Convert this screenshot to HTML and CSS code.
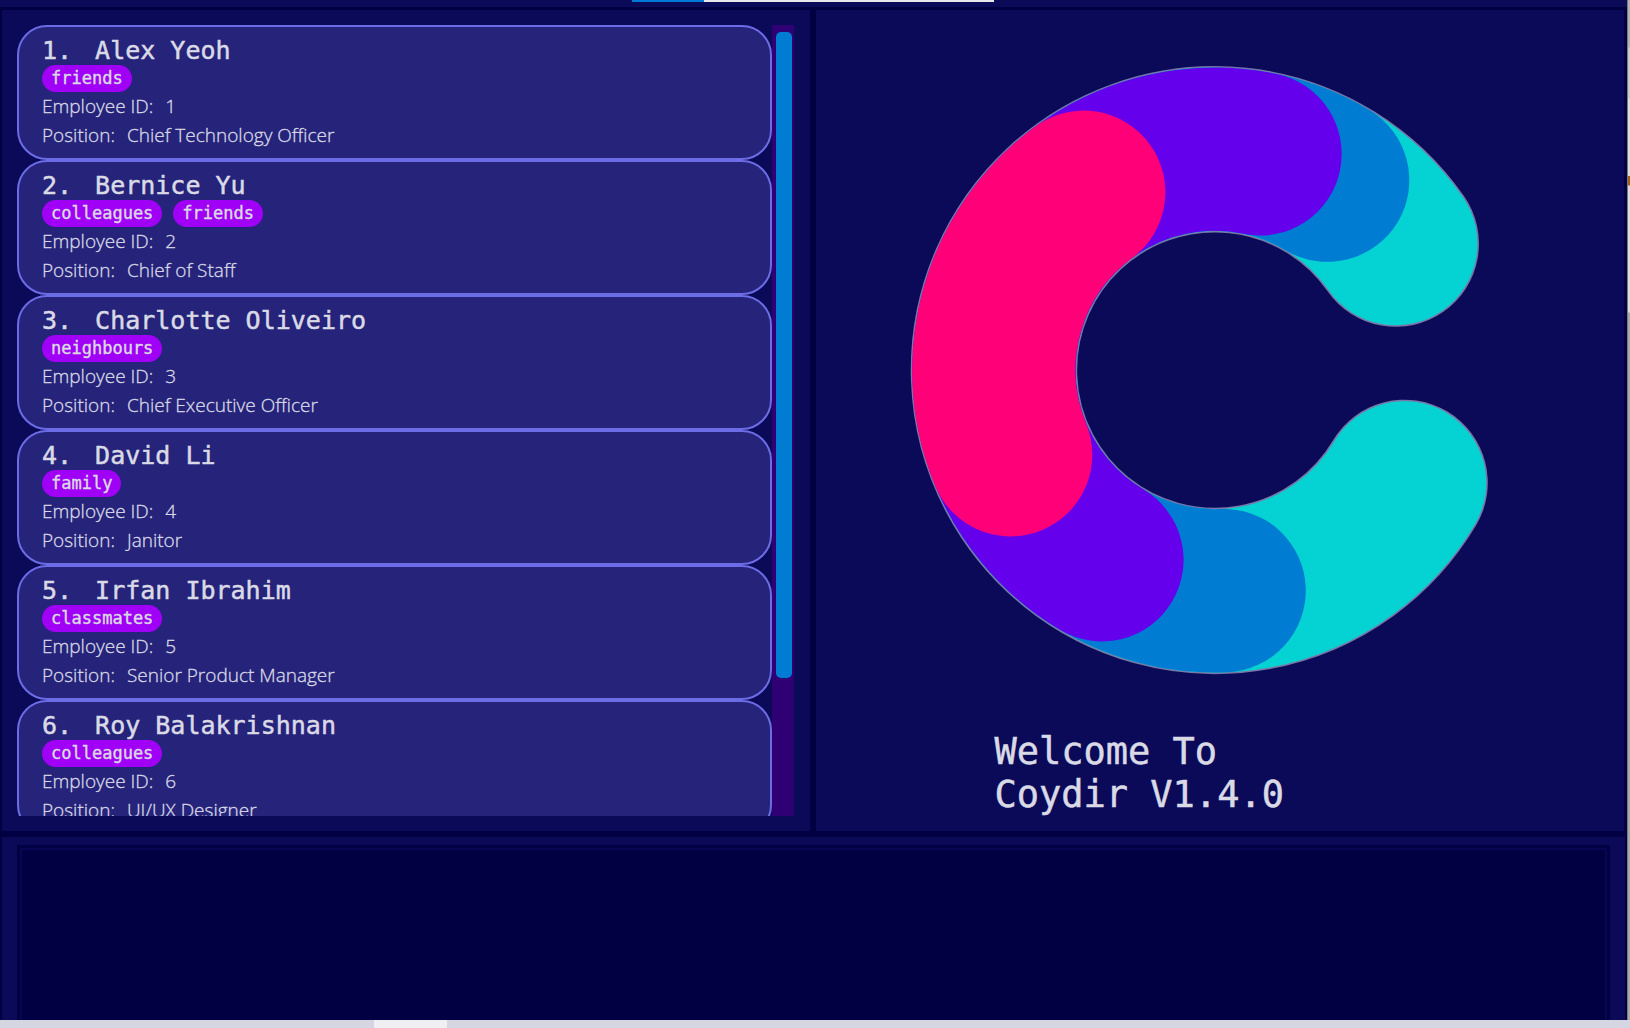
FILE: index.html
```html
<!DOCTYPE html>
<html lang="en">
<head>
<meta charset="utf-8">
<title>Coydir</title>
<meta name="viewport" content="width=device-width, initial-scale=1">
<link rel="stylesheet" href="styles.css">
</head>
<body>
<div class="window">
  <div class="app">
    <div class="topbar"><span class="topbar-accent"></span><span class="topbar-rest"></span></div>
    <main class="main">
      <section class="panel list-panel" aria-label="Employees">
        <ol class="list">
          <li class="card">
            <h2 class="name"><span>1.</span><span>Alex Yeoh</span></h2>
            <div class="tags"><span class="tag">friends</span></div>
            <p class="field"><span>Employee ID:</span><span>1</span></p>
            <p class="field"><span>Position:</span><span>Chief Technology Officer</span></p>
          </li>
          <li class="card">
            <h2 class="name"><span>2.</span><span>Bernice Yu</span></h2>
            <div class="tags"><span class="tag">colleagues</span><span class="tag">friends</span></div>
            <p class="field"><span>Employee ID:</span><span>2</span></p>
            <p class="field"><span>Position:</span><span>Chief of Staff</span></p>
          </li>
          <li class="card">
            <h2 class="name"><span>3.</span><span>Charlotte Oliveiro</span></h2>
            <div class="tags"><span class="tag">neighbours</span></div>
            <p class="field"><span>Employee ID:</span><span>3</span></p>
            <p class="field"><span>Position:</span><span>Chief Executive Officer</span></p>
          </li>
          <li class="card">
            <h2 class="name"><span>4.</span><span>David Li</span></h2>
            <div class="tags"><span class="tag">family</span></div>
            <p class="field"><span>Employee ID:</span><span>4</span></p>
            <p class="field"><span>Position:</span><span>Janitor</span></p>
          </li>
          <li class="card">
            <h2 class="name"><span>5.</span><span>Irfan Ibrahim</span></h2>
            <div class="tags"><span class="tag">classmates</span></div>
            <p class="field"><span>Employee ID:</span><span>5</span></p>
            <p class="field"><span>Position:</span><span>Senior Product Manager</span></p>
          </li>
          <li class="card">
            <h2 class="name"><span>6.</span><span>Roy Balakrishnan</span></h2>
            <div class="tags"><span class="tag">colleagues</span></div>
            <p class="field"><span>Employee ID:</span><span>6</span></p>
            <p class="field"><span>Position:</span><span>UI/UX Designer</span></p>
          </li>
        </ol>
        <div class="track"><div class="thumb"></div></div>
      </section>
      <section class="panel welcome">
        <svg class="logo" viewBox="-295 -300 600 600" role="img" aria-label="Coydir logo" fill="none" stroke-linecap="round" stroke-width="157">
          <path stroke="#7878a8" stroke-width="160" d="M174-121.500A212.300 212.300 0 1 0 182.500 108.500"/>
          <path stroke="#05d2d2" d="M174-121.500A212.300 212.300 0 1 0 182.500 108.500"/>
          <path stroke="#007dd2" d="M108.500-182.500A212.300 212.300 0 1 0 9 212.100"/>
          <path stroke="#6400eb" d="M43.500-207.800A212.300 212.300 0 0 0-108.500 182.500"/>
          <path stroke="#ff0078" d="M-126-170.900A212.300 212.300 0 0 0-196.300 81.500"/>
        </svg>
        <h1 class="welcome-text">Welcome To<br>Coydir V1.4.0</h1>
      </section>
    </main>
    <section class="result">
      <textarea class="result-box" aria-label="Result" readonly></textarea>
    </section>
  </div>
  <div class="edge"></div>
  <div class="footer"><span class="footer-light"></span></div>
</div>
</body>
</html>
```
FILE: styles.css
```css
* { box-sizing: border-box; }

body {
  margin: 0;
  background: #000042;
  color: #dadae6;
  font-family: "Open Sans", "Noto Sans", sans-serif;
  font-size: 19px;
}

.window {
  display: grid;
  grid-template-columns: minmax(0, 1fr) 3px;
  grid-template-rows: minmax(0, 1fr) 8px;
  height: 100vh;
  overflow: hidden;
}

.app { display: flex; flex-direction: column; min-height: 0; }

.topbar {
  display: flex;
  flex: none;
  height: 7px;
  padding-left: 632px;
  background: #0a0a58;
}
.topbar span { height: 2px; }
.topbar-accent { width: 72px; background: #0078d7; }
.topbar-rest { width: 290px; background: #e8e8e8; }

.main {
  display: grid;
  grid-template-columns: 1fr 1fr;
  gap: 6px;
  flex: 1;
  min-height: 0;
  padding: 3px 3px 6px 2px;
}

.panel { min-width: 0; min-height: 0; background: #0a0a58; }

.list-panel {
  display: grid;
  grid-template-columns: minmax(0, 1fr) 22px;
  padding: 15px 16px 15px 15px;
}

.list { margin: 0; padding: 0; list-style: none; overflow: hidden; }

.card {
  padding: 9px 23px 8px;
  border: 2px solid #6c6ce6;
  border-radius: 30px;
  background: #25237a;
}

.name {
  display: flex;
  gap: 23px;
  margin: 0;
  font: 400 25px/29px "DejaVu Sans Mono", monospace;
  -webkit-text-stroke: 0.5px currentColor;
}

.tags { display: flex; gap: 11px; }
.tag {
  padding: 0 9px;
  border-radius: 14px;
  background: #a000f5;
  font: 400 17px/27px "DejaVu Sans Mono", monospace;
  -webkit-text-stroke: 0.4px currentColor;
}

.field {
  display: flex;
  gap: 12px;
  margin: 0;
  font-weight: 300;
  line-height: 29px;
  -webkit-text-stroke: 0.3px currentColor;
}

.track { padding: 7px 2px 6px 4px; background: #2f0073; }
.thumb { height: 83%; border-radius: 5px; background: #007dd2; }

.welcome {
  display: flex;
  flex-direction: column;
  justify-content: space-between;
  align-items: center;
  padding: 48px 15px 15px;
}
.logo { width: 100%; max-width: 624px; min-height: 0; }

.welcome-text {
  align-self: flex-start;
  margin: 0 0 0 21%;
  font: 400 37px/43px "DejaVu Sans Mono", monospace;
  -webkit-text-stroke: 0.5px currentColor;
}

.result {
  display: flex;
  flex: none;
  height: 183px;
  margin: 0 2px;
  padding: 8px 15px 0;
  background: #0a0a58;
}
.result-box {
  flex: 1;
  padding: 15px;
  border: 3px solid #000042;
  border-bottom: 0;
  outline: 0;
  resize: none;
  background: #000042;
  box-shadow: inset 2px 2px #060653, inset -2px 0 #060653;
  color: inherit;
  font: inherit;
}

.edge {
  background: linear-gradient(#b4b4b0 0 47px, #ccccca 48px 98px, #dcdcd8 99px 176px, #a06414 176px 185px, #dcdcd8 186px 312px, #aaaaa6 313px 100%);
  border-left: 1px solid #787882;
}

.footer { display: flex; grid-column: 1 / -1; padding-left: 374px; background: #d6d6e2; }
.footer-light { width: 73px; background: #f0f0f4; }
```
